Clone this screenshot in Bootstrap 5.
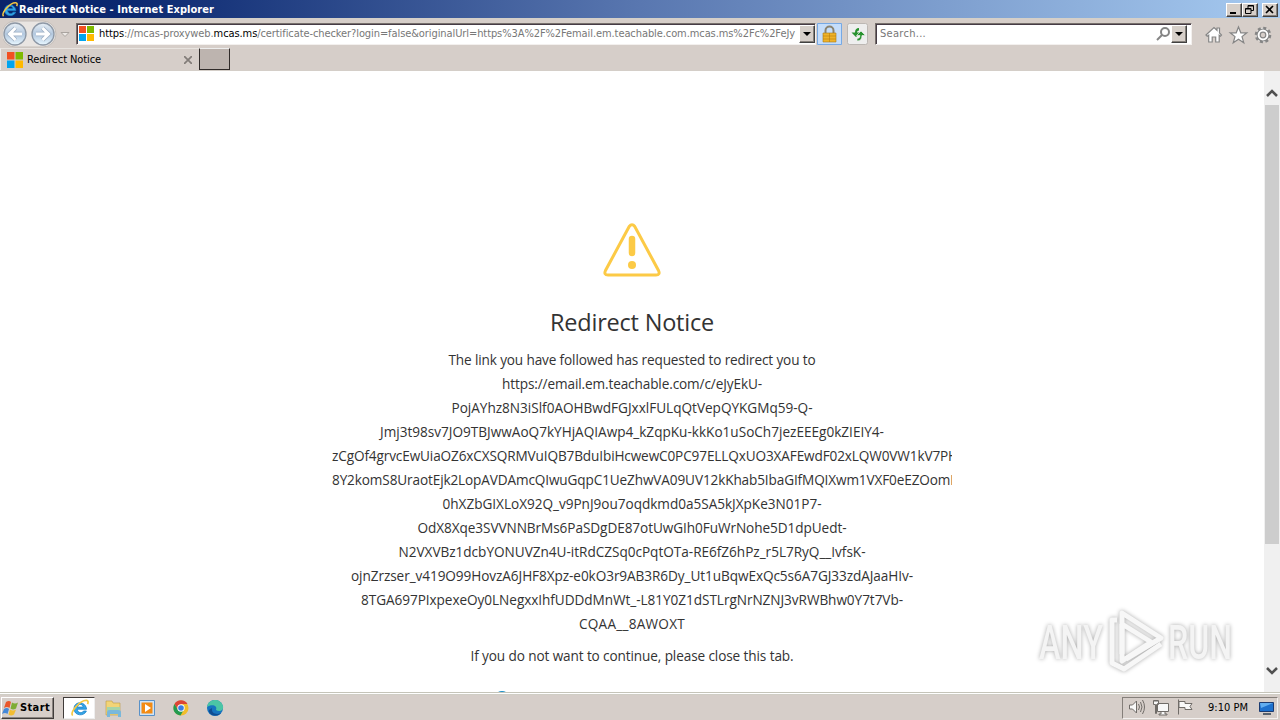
<!DOCTYPE html>
<html lang="en">
<head>
<meta charset="utf-8">
<title>Redirect Notice</title>
<link href="https://cdn.jsdelivr.net/npm/bootstrap@5.3.0/dist/css/bootstrap.min.css" rel="stylesheet">
<style>
body{width:1280px;height:720px;overflow:hidden;background:#fff;font:11px/14px "DejaVu Sans Condensed","Noto Sans",sans-serif;color:#000}
svg{display:block;flex:none}
[data-w]{white-space:nowrap;display:inline-block;flex:none}
.titlebar{height:18px;background:linear-gradient(90deg,#0a246a,#0b2870 10%,#5977b0 50%,#a6caf0);padding:1px 2px 0 2px}
.titlebar b{color:#fff;font-size:11px;margin-left:1px}
.winbtn{width:16px;height:14px;background:#d6cfc9;border:1px solid;border-color:#fff #404040 #404040 #fff;box-shadow:inset -1px -1px #85807b}
.addrbar{height:30px;background:#d6cec9;border-top:1px solid #d4d0c8;padding-left:3px}
.field{height:22px;background:#fff;border:1px solid;border-color:#77706c #f3f0ee #f3f0ee #77706c;box-shadow:inset 1px 1px #463b45;padding-left:2px}
.url-field{width:740px}
.find-field{width:317px;padding-left:4px;margin-left:1px}
.drop{width:16px;height:18px}
.gray-t{color:#777}
.url-text{margin-left:5px}
.tabrow{height:23px;background:#d6cec9;border-bottom:1px solid #d4cec8}
.tab-on{width:199px;height:22px;border-top:1px solid #e8e4e0;border-left:1px solid #eee;padding:1px 7px 0 6px}
.tab-new{width:31px;height:22px;background:#bdb4af;border:1px solid;border-color:#eee #302b29 #302b29 #302b29}
.viewport-box{height:621px;background:#fff}
.notice{width:640px;margin-left:312px;padding:146px 20px 0;color:#333;font-family:"Open Sans","Noto Sans",sans-serif}
.notice h1{font:400 23.5px/32px "Open Sans",sans-serif;margin:23px 0 10px}
.notice .ln{height:24px;font-size:13.6px;line-height:24px}
.spinner-dots{margin:23px 0 0 163px}
.scroller{width:16px;background:#f0f0f0;padding:17px 0 13px}
.thumb{height:439px;width:14px;margin-left:1px;margin-top:7px;background:#cdcdcd}
.taskbar{height:28px;background:#d6cec9;border-top:1px solid #c5c4b9;box-shadow:inset 0 1px #fff,inset 0 2px #d0cec5;padding:2px 2px 0 1px}
.raised{height:22px;width:53px;border:1px solid;border-color:#fff #403c3a #403c3a #fff;box-shadow:inset -1px -1px #8a8480}
.sunk{width:32px;height:22px;background:#fff;border:1px solid;border-color:#403c3a #eee #eee #403c3a;padding-left:7px;margin-left:9px}
.tray{width:156px;height:22px;border:1px solid;border-color:#857f7a #f4f1ef #f4f1ef #857f7a;padding:0 1px 0 4px}
.wm{right:44px;top:604px;overflow:visible;filter:drop-shadow(0 0 2px #aaa)}
</style>
</head>
<body>
<svg width="0" height="0" class="position-absolute"><defs>
<symbol id="ie" viewBox="0 0 18 18"><path d="M15.6 10.2H6.3c.1 4 5.1 4.5 6.2 1.8h2.9C13.300 17.500 3 17.300 3 9.600S14.700 1.800 15.600 10.200ZM6.400 8.100h5.800c-.3-3.500-5.500-3.500-5.800 0Z" fill="#35a6e6" stroke="#1a82ca" stroke-width=".8"/><path d="M1.700 16.500C-1.300 13.500 9 1 15.500 1.400c1.600.1 2 1.700 1 3.800" fill="none" stroke="#f5c842" stroke-width="1.700"/></symbol>
<symbol id="ms" viewBox="0 0 16 16"><path fill="#f25022" d="M0 0h7.500v7.500H0z"/><path fill="#7fba00" d="M8.500 0H16v7.500H8.500z"/><path fill="#00a4ef" d="M0 8.500h7.500V16H0z"/><path fill="#ffb900" d="M8.500 8.500H16V16H8.500z"/></symbol>
<linearGradient id="orb" x2="0" y2="1"><stop stop-color="#e9f0f6"/><stop offset=".5" stop-color="#b3c8df"/><stop offset="1" stop-color="#e8f7ff"/></linearGradient>
</defs></svg>

<header>
 <div class="titlebar d-flex align-items-center">
  <svg width="16" height="17"><use href="#ie"/></svg><b data-w="195">Redirect Notice - Internet Explorer</b>
  <div class="ms-auto d-flex">
   <span class="winbtn"><svg width="14" height="12"><path d="M3 9h6" stroke="#000" stroke-width="2"/></svg></span>
   <span class="winbtn"><svg width="14" height="12" fill="none" stroke="#000"><path d="M5 4V1.500h5.500v5H8M5 2h5.500M2.500 4.500h5.500v5H2.500zM2.500 5h5.500"/></svg></span>
   <span class="winbtn ms-1"><svg width="14" height="12"><path d="m3 2 7 7M10 2 3 9" stroke="#000" stroke-width="1.600"/></svg></span>
  </div>
 </div>
 <div class="addrbar d-flex align-items-center">
  <svg width="73" height="28" viewBox="4 20 73 28"><path d="M16 21h28a12 12 0 0 1 0 26H16a13 13 0 0 1 0-26" fill="#e9e5e2" stroke="#c4beb9"/><circle cx="16" cy="34" r="11" fill="url(#orb)" stroke="#8d98a6" stroke-width="1.300"/><circle cx="44" cy="34" r="11" fill="url(#orb)" stroke="#8d98a6" stroke-width="1.300"/><g fill="none" stroke="#9dafc4" stroke-width="4.500"><path d="M23 34H11m5.500-6-6 6 6 6M37 34h12m-5.500-6 6 6-6 6"/></g><g fill="none" stroke="#fff" stroke-width="3"><path d="M23 34H11m5.500-6-6 6 6 6M37 34h12m-5.500-6 6 6-6 6"/></g><path d="M62 32.500h8l-4 4z" fill="#eeeae7" stroke="#aaa49f"/></svg>
  <div class="field url-field d-flex align-items-center"><svg width="15" height="15"><use href="#ms"/></svg><span class="gray-t url-text" data-w="696"><span class="text-black">https</span>://mcas-proxyweb.<span class="text-black">mcas.ms</span>/certificate-checker?login=false&amp;originalUrl=https%3A%2F%2Femail.em.teachable.com.mcas.ms%2Fc%2FeJy</span><span class="winbtn drop ms-auto"><svg width="14" height="16"><path d="M3 6h8L7 10z"/></svg></span></div>
  <svg width="58" height="24" viewBox="816 21 58 24"><path d="M817.500 22.500h24v21h-24z" fill="#c5ddfa" stroke="#76a9e5"/><path d="M825.500 33v-3.500a4 4 0 0 1 8 0V33" fill="none" stroke="#8b836f" stroke-width="2"/><path d="M823 32h13v9h-13z" fill="#efb329" stroke="#a77914" stroke-width=".6"/><path d="M823 35h13m-13 3h13m-6.500-6v9" stroke="#b57d0d" stroke-width=".6"/><rect x="847.500" y="22.500" width="20" height="21" rx="2" fill="#eee" stroke="#bcb7b3"/><g fill="#27922e"><path d="M859 27q-4 0-4 4.500h-3.500l4.500 4.500 4.500-4.500H857q0-2 2-2z"/><path d="M857 40q5 0 5-5.500h3.500L861 30l-4.500 4.500h3.500q0 3-3 3z" stroke="#eee" stroke-width=".7"/></g></svg>
  <div class="field find-field d-flex align-items-center"><span class="gray-t" data-w="46">Search...</span><svg class="ms-auto" width="18" height="18" fill="none" stroke="#858585" stroke-width="2"><circle cx="12" cy="7" r="4"/><path d="m9 10-5 5"/></svg><span class="winbtn drop me-1"><svg width="14" height="16"><path d="M3 6h8L7 10z"/></svg></span></div>
  <svg width="84" height="28" viewBox="1193 20 84 28" fill="#fff" stroke="#858585" stroke-width="1.200"><path d="m1207 35 8-7.500 3 2.800V28h2.500v5l2 2-1 1.200-1.300-1V42h-3.500v-5h-3.500v5h-3.500v-6.800l-1.500 1z"/><path d="m1239.500 27 2.300 5.800h6l-4.800 3.800 1.800 6.200-5.300-3.600-5.300 3.600 1.800-6.200-4.800-3.800h6z"/><circle cx="1264" cy="35" r="7" stroke-width="2.600" stroke-dasharray="3 2.500"/><circle cx="1264" cy="35" r="6"/><circle cx="1264" cy="35" r="2.800" fill="#d6cec9"/></svg>
 </div>
 <div class="tabrow d-flex">
  <div class="tab-on d-flex align-items-center"><svg width="16" height="16"><use href="#ms"/></svg><span class="ms-1" data-w="74">Redirect Notice</span><svg class="ms-auto" width="8" height="8"><path d="m0 0 8 8M8 0 0 8" stroke="#827c78" stroke-width="1.700"/></svg></div><div class="tab-new"></div>
 </div>
</header>

<main class="viewport-box d-flex justify-content-between">
 <section class="notice overflow-hidden text-center">
  <svg class="mx-auto" width="64" height="66" fill="none" stroke="#fcca46"><path d="M29.200 9.500 5.500 53.500Q3.500 58 8 58h48q4.500 0 2.500-4.500L34.800 9.500Q32 6 29.200 9.500Z" stroke-width="3"/><path d="M32 22v14" stroke-width="6.500" stroke-linecap="round"/><circle cx="32" cy="48" r="4" fill="#fcca46" stroke="none"/></svg>
  <h1><span data-w="164">Redirect Notice</span></h1>
  <div class="ln"><span data-w="367">The link you have followed has requested to redirect you to</span></div>
  <div class="ln"><span data-w="260">https://email.em.teachable.com/c/eJyEkU-</span></div>
  <div class="ln"><span data-w="361">PojAYhz8N3iSlf0AOHBwdFGJxxlFULqQtVepQYKGMq59-Q-</span></div>
  <div class="ln"><span data-w="504">Jmj3t98sv7JO9TBJwwAoQ7kYHjAQIAwp4_kZqpKu-kkKo1uSoCh7jezEEEg0kZIEIY4-</span></div>
  <div class="ln text-start"><span data-w="626">zCgOf4grvcEwUiaOZ6xCXSQRMVuIQB7BduIbiHcwewC0PC97ELLQxUO3XAFEwdF02xLQW0VW1kV7PH</span></div>
  <div class="ln text-start"><span data-w="622">8Y2komS8UraotEjk2LopAVDAmcQIwuGqpC1UeZhwVA09UV12kKhab5IbaGIfMQIXwm1VXF0eEZOomI</span></div>
  <div class="ln"><span data-w="379">0hXZbGIXLoX92Q_v9PnJ9ou7oqdkmd0a5SA5kJXpKe3N01P7-</span></div>
  <div class="ln"><span data-w="429">OdX8Xqe3SVVNNBrMs6PaSDgDE87otUwGIh0FuWrNohe5D1dpUedt-</span></div>
  <div class="ln"><span data-w="467">N2VXVBz1dcbYONUVZn4U-itRdCZSq0cPqtOTa-RE6fZ6hPz_r5L7RyQ__IvfsK-</span></div>
  <div class="ln"><span data-w="562">ojnZrzser_v419O99HovzA6JHF8Xpz-e0kO3r9AB3R6Dy_Ut1uBqwExQc5s6A7GJ33zdAJaaHIv-</span></div>
  <div class="ln"><span data-w="542">8TGA697PIxpexeOy0LNegxxIhfUDDdMnWt_-L81Y0Z1dSTLrgNrNZNJ3vRWBhw0Y7t7Vb-</span></div>
  <div class="ln"><span data-w="106">CQAA__8AWOXT</span></div>
  <div class="ln mt-2"><span data-w="323">If you do not want to continue, please close this tab.</span></div>
  <svg class="spinner-dots" width="16" height="16"><circle cx="7" cy="8" r="8" fill="#1b8fc6"/></svg>
 </section>
 <aside class="scroller d-flex flex-column">
  <svg width="16" height="10"><path d="m3 8 5-5 5 5" fill="none" stroke="#505050" stroke-width="2.500"/></svg>
  <div class="thumb"></div>
  <svg class="mt-auto" width="16" height="14"><path d="m3 3 5 5 5-5" fill="none" stroke="#505050" stroke-width="2.500"/></svg>
 </aside>
</main>

<footer class="taskbar d-flex align-items-center">
 <div class="raised d-flex align-items-center"><svg width="18" height="18"><path d="M4 3q3-2 5 0L7.500 9Q5 7 2 9z" fill="#e9562b"/><path d="M10 3.500q3 2 6 0L14 9.500q-3 2-5.500 0z" fill="#7dac35"/><path d="M2 10q3-2 5 0l-1.500 5Q3 13 0 15z" fill="#4488d8"/><path d="M8 10.500q3 2 6 0l-2 5q-3 2-5.500 0z" fill="#f3bd31"/></svg><b data-w="30">Start</b></div>
 <div class="sunk d-flex align-items-center"><svg width="18" height="18"><use href="#ie"/></svg></div>
 <svg width="140" height="24" viewBox="95 695 140 24"><path d="M106 700h6l1 2h7v12h-14z" fill="#f2d477" stroke="#bd9b45" stroke-width=".6"/><path d="M107 706h13v4h-13z" fill="#a6d4a8"/><path d="M107 716v-5q0-2 3-2h8q3 0 3 2v5h-3v-3h-8v3z" fill="#7ab8db"/><path d="M139.500 699.500h15v15h-15z" fill="#cfe4f7" stroke="#5991c8"/><path d="M141.500 701.500h11v11h-11z" fill="#f38b13"/><path d="m145 703 6 4-6 4z" fill="#fff"/><circle cx="181" cy="707" r="7.500" fill="#f1bd2c"/><path d="M174.500 703a7.500 7.500 0 0 1 13 0H181l-3 6z" fill="#dc4536"/><path d="M174.500 703a7.500 7.500 0 0 0 6 11.500l3.500-6-6 .5z" fill="#239a50"/><circle cx="181" cy="707" r="3.700" fill="#fff"/><circle cx="181" cy="707" r="2.800" fill="#3b7de2"/><circle cx="215" cy="707" r="8" fill="#1674bf"/><path d="M207 706c1-8 13-10 16-1 1 5-4 6-7 4 2-5-5-6-9-3" fill="#4bc5a5"/><path d="M212 707c-1 6 5 7 9 5-4 5-13 2-12-3z" fill="#104c91"/></svg>
 <div class="tray d-flex align-items-center ms-auto">
  <svg width="70" height="20" viewBox="1127 698 70 20" fill="#f8f8f8" stroke="#706c68"><path d="M1129.500 705h3l4-4v12l-4-4h-3z"/><path d="M1138.500 704q2 3 0 6m2-8q3 5 0 10m2-12q4 7 0 14" fill="none"/><path d="M1157.500 703.500h11v8h-11zM1161 712v2h-2v1h8v-1h-2v-2M1153.500 700.500h5v4h-2v9h-1v-9h-2zM1155 700v2m2-2v2"/><path d="M1178.500 714.500v-15M1179 701.500h6v2h7l-2 3 2 3h-7v-2h-6z"/></svg>
  <span class="ms-auto" data-w="40">9:10 PM</span>
  <svg class="ms-2" width="20" height="16"><path d="M3.500 2.500h14v9h-14z" fill="#1e71cd" stroke="#1c3b70"/><path d="M4 3h13L5 8z" fill="#62aef0"/><path d="M7 14h8" stroke="#59626d" stroke-width="2"/></svg>
 </div>
</footer>

<svg class="wm position-absolute" width="200" height="74" viewBox="1036 604 200 74" fill="none" stroke="#f7f7f7">
 <g fill="#f4f4f4" stroke="none" font-family="Roboto,sans-serif" font-weight="500" font-size="49"><text x="1039" y="659" textLength="64" lengthAdjust="spacingAndGlyphs">ANY</text><text x="1168" y="659" textLength="64" lengthAdjust="spacingAndGlyphs">RUN</text></g>
 <g stroke-width="5" stroke-linejoin="round"><path d="M1122 654v-41l39 25-35 21"/><path d="M1122 624l29 18-29 19v-37"/><path d="M1117 620h-5v43l12 6 37-25"/></g>
</svg>
<script src="https://cdn.jsdelivr.net/npm/bootstrap@5.3.0/dist/js/bootstrap.bundle.min.js"></script>
<script>
// Track each label to its nominal width.
document.querySelectorAll('[data-w]').forEach(function(el){
  var cur = el.getBoundingClientRect().width;
  el.style.letterSpacing = ((+el.dataset.w - cur) / el.textContent.length) + 'px';
});
</script>
</body>
</html>
